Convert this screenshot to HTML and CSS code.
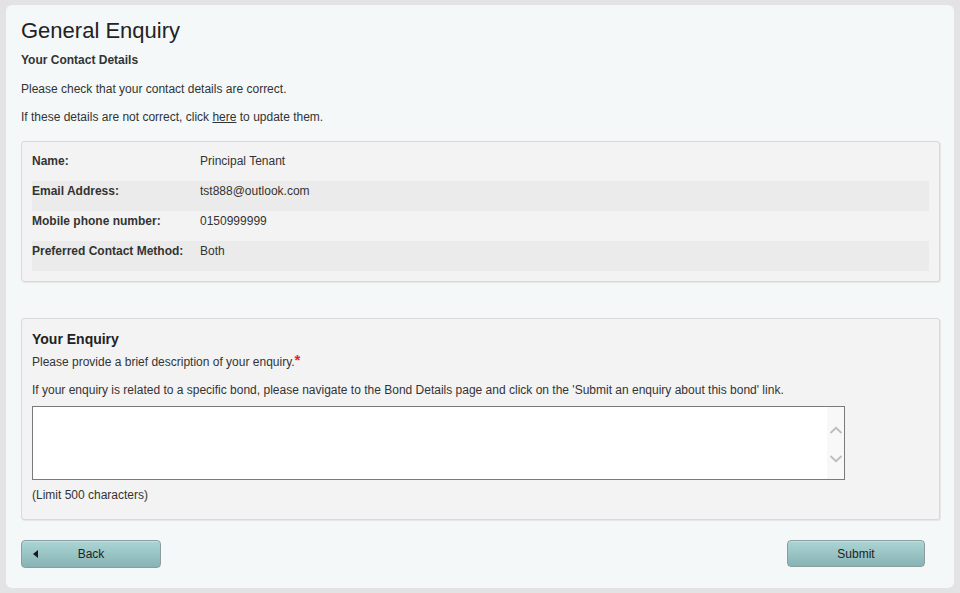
FILE: index.html
```html
<!DOCTYPE html>
<html lang="en">
<head>
<meta charset="utf-8">
<title>General Enquiry</title>
<link rel="stylesheet" href="styles.css">
</head>
<body>
<div class="card">
  <h1 class="title">General Enquiry</h1>
  <h2 class="subtitle">Your Contact Details</h2>
  <p class="intro first">Please check that your contact details are correct.</p>
  <p class="intro">If these details are not correct, click <a class="link" href="#">here</a> to update them.</p>

  <div class="panel details">
    <div class="row"><div class="label">Name:</div><div class="value">Principal Tenant</div></div>
    <div class="row shaded"><div class="label">Email Address:</div><div class="value">tst888@outlook.com</div></div>
    <div class="row"><div class="label">Mobile phone number:</div><div class="value">0150999999</div></div>
    <div class="row shaded"><div class="label">Preferred Contact Method:</div><div class="value">Both</div></div>
  </div>

  <div class="panel enquiry">
    <h3 class="panel-title">Your Enquiry</h3>
    <p class="field-label">Please provide a brief description of your enquiry.<span class="req">*</span></p>
    <p class="hint">If your enquiry is related to a specific bond, please navigate to the Bond Details page and click on the 'Submit an enquiry about this bond' link.</p>
    <div class="textarea-wrap">
      <textarea class="textarea"></textarea>
      <div class="scrollbar">
        <svg class="chev" width="14" height="8" viewBox="0 0 14 8"><path d="M1.5 7 L7 1.8 L12.5 7" fill="none" stroke="#bdbdbd" stroke-width="1.8"/></svg>
        <svg class="chev" width="14" height="8" viewBox="0 0 14 8"><path d="M1.5 1 L7 6.2 L12.5 1" fill="none" stroke="#bdbdbd" stroke-width="1.8"/></svg>
      </div>
    </div>
    <p class="limit">(Limit 500 characters)</p>
  </div>

  <div class="actions">
    <button class="btn btn-back"><span class="arrow"></span>Back</button>
    <button class="btn btn-submit">Submit</button>
  </div>
</div>
</body>
</html>
```
FILE: styles.css
```css
html, body {
  margin: 0;
  padding: 0;
}
body {
  background: #e3e3e3;
  padding: 5px 6px 5px 6px;
  font-family: "Liberation Sans", Arial, sans-serif;
  font-size: 12px;
  color: #333;
}
.card {
  background: #f4f8f9;
  border-radius: 6px;
  padding: 13px 14px 20px 15px;
}
.title {
  margin: 0;
  font-size: 22px;
  line-height: 26px;
  font-weight: normal;
  color: #222;
}
.subtitle {
  margin: 8px 0 0;
  font-size: 12px;
  line-height: 16px;
  font-weight: bold;
  color: #333;
}
.intro {
  margin: 12px 0 0;
  line-height: 16px;
}
.intro.first {
  margin-top: 13px;
}
.link {
  color: #333;
  text-decoration: underline;
}
.panel {
  background: #f3f3f3;
  border: 1px solid #d9d9d9;
  border-radius: 3px;
  box-shadow: 1px 1px 0 #e6e6e6;
}
.details {
  margin-top: 16px;
  padding: 9px 10px 10px;
}
.row {
  display: grid;
  grid-template-columns: 168px 1fr;
  line-height: 20px;
  height: 30px;
}
.row.shaded {
  background: #ebebeb;
}
.label {
  font-weight: bold;
}
.enquiry {
  margin-top: 36px;
  padding: 11px 10px 16px;
}
.panel-title {
  margin: 0;
  font-size: 14px;
  line-height: 18px;
  font-weight: bold;
  color: #222;
}
.field-label {
  margin: 6px 0 0;
  line-height: 16px;
}
.req {
  color: #e3232c;
  font-weight: bold;
  font-size: 15px;
  line-height: 10px;
  position: relative;
  top: -1px;
}
.hint {
  margin: 12px 0 0;
  line-height: 16px;
}
.textarea-wrap {
  position: relative;
  margin-top: 8px;
  width: 813px;
  height: 74px;
}
.textarea {
  display: block;
  box-sizing: border-box;
  width: 813px;
  height: 74px;
  margin: 0;
  border: 1px solid #7a7a7a;
  background: #fff;
  resize: none;
  font-family: "Liberation Sans", Arial, sans-serif;
  font-size: 12px;
  padding: 2px;
  outline: none;
}
.scrollbar {
  position: absolute;
  top: 1px;
  right: 1px;
  bottom: 1px;
  width: 17px;
  background: #f8f8f8;
  display: flex;
  flex-direction: column;
  align-items: center;
  justify-content: space-between;
  padding: 19px 0 16px;
  box-sizing: border-box;
}
.chev {
  display: block;
}
.limit {
  margin: 7px 0 0;
  line-height: 16px;
}
.actions {
  margin-top: 20px;
  display: flex;
  justify-content: space-between;
  align-items: flex-start;
}
.btn {
  position: relative;
  box-sizing: border-box;
  border: 1px solid #8d9d9d;
  border-radius: 4px;
  background: linear-gradient(#acd5d5, #87b3b4);
  font-family: "Liberation Sans", Arial, sans-serif;
  font-size: 12px;
  color: #222;
  padding: 0;
  margin: 0;
  text-align: center;
  box-shadow: inset 0 1px 0 rgba(255,255,255,0.25);
}
.btn-back {
  width: 140px;
  height: 28px;
}
.btn-submit {
  width: 138px;
  height: 27px;
  margin-right: 15px;
}
.arrow {
  position: absolute;
  left: 11px;
  top: 9px;
  width: 0;
  height: 0;
  border-top: 4px solid transparent;
  border-bottom: 4px solid transparent;
  border-right: 5px solid #1a1a1a;
}
```
